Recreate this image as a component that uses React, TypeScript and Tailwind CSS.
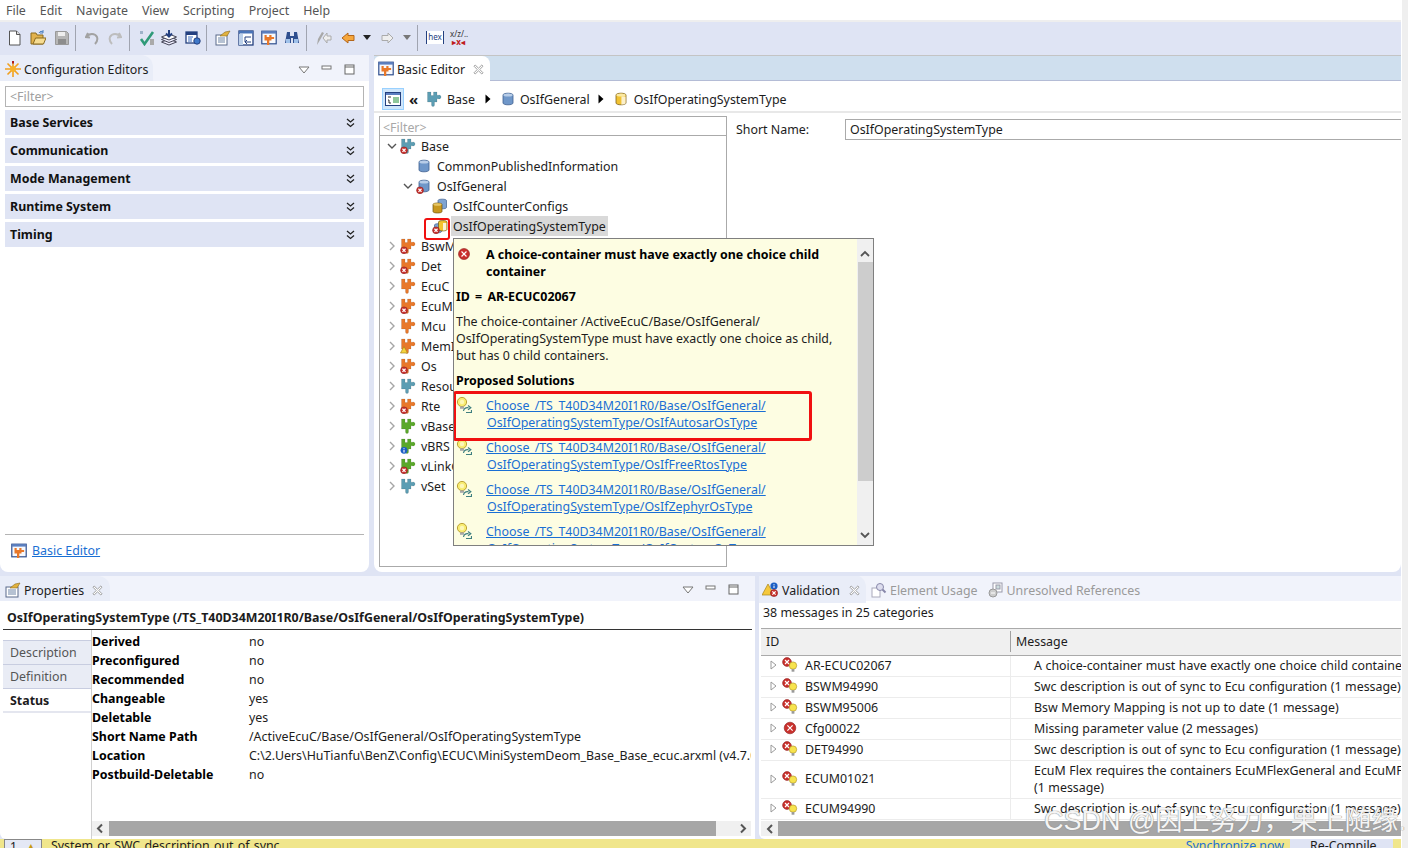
import React from "react";

const X = ({ cx, cy, r }: { cx: number; cy: number; r: number }) => (
  <g>
    <circle cx={cx} cy={cy} r={r} fill="#c9302c" stroke="#8f1f1f" strokeWidth="0.6" />
    <path d={`M${cx - r * 0.45} ${cy - r * 0.45}L${cx + r * 0.45} ${cy + r * 0.45}M${cx + r * 0.45} ${cy - r * 0.45}L${cx - r * 0.45} ${cy + r * 0.45}`} stroke="#fff" strokeWidth="1.2" />
  </g>
);

const Badge = ({ kind }: { kind?: string }) => {
  if (kind === "err") return <X cx={4} cy={12.3} r={3.4} />;
  if (kind === "warn") return <path d="M4 8.5L7.5 15H.5z" fill="#f5d33c" stroke="#a8841a" strokeWidth="0.7" />;
  if (kind === "info")
    return (
      <g>
        <circle cx={4} cy={12.3} r={3.4} fill="#1c5fc4" />
        <path d="M4 10v.8M4 11.8v2.6" stroke="#fff" strokeWidth="1.1" />
      </g>
    );
  return null;
};

const Puzzle = ({ c, badge, d = "#00000030" }: { c: string; badge?: string; d?: string }) => (
  <svg width="16" height="16" viewBox="0 0 16 16" className="shrink-0">
    <path d="M1.5 1h3.5v3.5h2.5V1H11v3.2h1.2a2 2 0 1 1 0 3.6H11V11H8.5v3a1.5 1.5 0 0 1-3 0v-3h-4z" fill={c} stroke={d} strokeWidth="0.5" />
    <Badge kind={badge} />
  </svg>
);

const Cyl = ({ gold, split, badge }: { gold?: boolean; split?: boolean; badge?: string }) => (
  <svg width="16" height="16" viewBox="0 0 16 16" className="shrink-0">
    <path d="M3 4c0-2.4 10-2.4 10 0v8c0 2.4-10 2.4-10 0z" fill={gold ? "#f1c232" : "#6f97c9"} stroke={gold ? "#7d6220" : "#3f5f8f"} strokeWidth="0.8" />
    <ellipse cx="8" cy="4" rx="4.6" ry="1.6" fill={gold ? "#fbe9a2" : "#b8cde8"} />
    {split && <path d="M8.4 5.5h4.2v7c-1 .8-3 1.2-4.2 1.2z" fill="#fff" opacity="0.75" />}
    <Badge kind={badge} />
  </svg>
);

const CylPair = ({ front, badge }: { front: "gold" | "split"; badge?: string }) => (
  <svg width="16" height="16" viewBox="0 0 16 16" className="shrink-0">
    {front === "gold" ? (
      <g>
        <path d="M6 2.5c0-1.8 8.5-1.8 8.5 0v7c0 1.8-8.5 1.8-8.5 0z" fill="#7ea3d1" stroke="#3f5f8f" strokeWidth="0.7" />
        <path d="M1 6.5c0-2 9-2 9 0v7c0 2-9 2-9 0z" fill="#c8981f" stroke="#6f5413" strokeWidth="0.7" />
        <ellipse cx="5.5" cy="6.5" rx="4.1" ry="1.3" fill="#e6c666" />
      </g>
    ) : (
      <g>
        <path d="M2.5 7c0-1.7 7-1.7 7 0v6.5c0 1.7-7 1.7-7 0z" fill="#7ea3d1" stroke="#3f5f8f" strokeWidth="0.7" />
        <path d="M6.5 4c0-1.9 8.5-1.9 8.5 0v7.5c0 1.9-8.5 1.9-8.5 0z" fill="#f3c52e" stroke="#6f5413" strokeWidth="0.7" />
        <path d="M11 5h3.3v6.7c-.8.5-2.3.8-3.3.8z" fill="#fff" opacity="0.8" />
      </g>
    )}
    <Badge kind={badge} />
  </svg>
);

const EditorIcon = () => (
  <svg width="16" height="16" viewBox="0 0 16 16" className="shrink-0">
    <rect x="0.8" y="1.2" width="14.4" height="12.6" fill="#f7f9fd" stroke="#2f4f8f" strokeWidth="1.2" />
    <rect x="1" y="1.2" width="14" height="2.4" fill="#5b7fc0" />
    <path d="M3.5 5h2.2v2h2.6V5h2.2v2h2.6v2h-2.6v1.5H8.3V15H6v-4.5H3.5z" fill="#e8782a" />
  </svg>
);

const Bulb = () => (
  <svg width="16" height="16" viewBox="0 0 16 16" className="shrink-0">
    <circle cx="6" cy="5" r="4.6" fill="#f8ec72" stroke="#b59a2a" strokeWidth="0.9" />
    <circle cx="6" cy="5" r="2.2" fill="#fdf7b8" />
    <rect x="4" y="9.4" width="4" height="2.4" fill="#a8a8a8" />
    <path d="M7.5 14c.5-2.8 2.5-3.6 5-3.3M12 8.6l2.8 2.1-2.8 2.1M10 15.5h5.5V13" stroke="#3f7f80" strokeWidth="1.2" fill="none" />
  </svg>
);

const ErrBulb = () => (
  <svg width="16" height="16" viewBox="0 0 16 16" className="shrink-0">
    <X cx={5} cy={5} r={4.4} />
    <circle cx="11" cy="8.6" r="3.7" fill="#f7e34e" stroke="#b59a2a" strokeWidth="0.7" />
    <rect x="9.6" y="12.1" width="2.8" height="2.6" fill="#9a9a9a" />
  </svg>
);

const ErrOnly = () => (
  <svg width="16" height="16" viewBox="0 0 16 16" className="shrink-0">
    <X cx={8} cy={8} r={5.8} />
  </svg>
);

const CloseX = () => (
  <svg width="11" height="11" viewBox="0 0 11 11" className="shrink-0">
    <path d="M1 2.2L2.2 1l3.3 3.2L8.8 1 10 2.2 6.8 5.5 10 8.8 8.8 10 5.5 6.8 2.2 10 1 8.8l3.2-3.3z" fill="#fff" stroke="#8a8a8a" strokeWidth="0.8" />
  </svg>
);

const ViewBtns = () => (
  <div className="flex items-center gap-[11px]">
    <svg width="12" height="8" viewBox="0 0 12 8"><path d="M1 1h10L6 7z" fill="#fff" stroke="#777" /></svg>
    <svg width="12" height="6" viewBox="0 0 12 6" className="mb-[4px]"><rect x="1" y="1" width="9" height="3" fill="#fff" stroke="#777" /></svg>
    <svg width="12" height="12" viewBox="0 0 12 12"><rect x="1" y="1" width="9" height="9" fill="#fff" stroke="#666" /><path d="M1 3h9" stroke="#666" /></svg>
  </div>
);

const Section = ({ t }: { t: string }) => (
  <div className="h-[25px] mx-[5px] bg-[#dfe4f4] flex items-center justify-between pl-[5px] pr-[9px] font-bold text-[#111] shrink-0">
    <span>{t}</span>
    <svg width="9" height="10" viewBox="0 0 9 10"><path d="M1 1l3.5 3L8 1M1 5.5l3.5 3 3.5-3" stroke="#222" strokeWidth="1.3" fill="none" /></svg>
  </div>
);

const Chev = ({ open }: { open?: boolean }) => (
  <svg width="10" height="10" viewBox="0 0 10 10" className="shrink-0">
    {open ? <path d="M1 3l4 4 4-4" stroke="#555" strokeWidth="1.4" fill="none" /> : <path d="M3 1l4 4-4 4" stroke="#a6a6a6" strokeWidth="1.4" fill="none" />}
  </svg>
);

const treeRows: [string, string, string?][] = [
  ["BswM", "#e8782a", "err"],
  ["Det", "#e8782a", "err"],
  ["EcuC", "#e8782a"],
  ["EcuM", "#e8782a", "err"],
  ["Mcu", "#e8782a"],
  ["MemIf", "#e8782a", "warn"],
  ["Os", "#e8782a", "err"],
  ["Resource", "#5c9db3"],
  ["Rte", "#e8782a", "err"],
  ["vBase", "#5aa82a"],
  ["vBRS", "#5aa82a", "info"],
  ["vLinkGen", "#5aa82a", "err"],
  ["vSet", "#5c9db3"],
];

const props: [string, string][] = [
  ["Derived", "no"],
  ["Preconfigured", "no"],
  ["Recommended", "no"],
  ["Changeable", "yes"],
  ["Deletable", "yes"],
  ["Short Name Path", "/ActiveEcuC/Base/OsIfGeneral/OsIfOperatingSystemType"],
  ["Location", "C:\\2.Uers\\HuTianfu\\BenZ\\Config\\ECUC\\MiniSystemDeom_Base_Base_ecuc.arxml (v4.7.0"],
  ["Postbuild-Deletable", "no"],
];

const sync = "Swc description is out of sync to Ecu configuration (1 message)";
const msgs: { id: string; m: string[]; err?: boolean }[] = [
  { id: "AR-ECUC02067", m: ["A choice-container must have exactly one choice child container"] },
  { id: "BSWM94990", m: [sync] },
  { id: "BSWM95006", m: ["Bsw Memory Mapping is not up to date (1 message)"] },
  { id: "Cfg00022", m: ["Missing parameter value (2 messages)"], err: true },
  { id: "DET94990", m: [sync] },
  { id: "ECUM01021", m: ["EcuM Flex requires the containers EcuMFlexGeneral and EcuMFixedGeneral", "(1 message)"] },
  { id: "ECUM94990", m: [sync] },
];

const links = ["OsIfAutosarOsType", "OsIfFreeRtosType", "OsIfZephyrOsType", "OsIfCustomOsType"];

const Tri = () => (
  <svg width="6" height="10" viewBox="0 0 6 10" className="shrink-0"><path d="M.5.5l5 4.5-5 4.5z" fill="#000" /></svg>
);

const Sep = () => <div className="w-px h-[26px] bg-[#a0a4b0] shrink-0" />;

const Toolbar = () => (
  <div className="h-[33px] flex items-center pl-[8px] shrink-0 pb-[2px]">
    <svg width="13" height="16" viewBox="0 0 13 16" className="mr-[9px]"><path d="M1.5 1h7l3.5 3.5V15H1.5z" fill="#fff" stroke="#555" /><path d="M8.5 1v3.5H12" fill="#ddd" stroke="#555" /></svg>
    <svg width="16" height="16" viewBox="0 0 16 16" className="mr-[9px]"><path d="M1 3h5l1 2h6v9H1z" fill="#e2b24e" stroke="#8a6a1f" /><path d="M3 14l2.5-6H16l-2.5 6z" fill="#f6dc92" stroke="#8a6a1f" /><path d="M9 3c1-2 3-2 4-1M13 0v3h-3" stroke="#4a7fc0" fill="none" /></svg>
    <svg width="14" height="14" viewBox="0 0 14 14" className="mr-[6px]"><path d="M.5.5h11l2 2v11H.5z" fill="#b6b6b6" stroke="#999" /><rect x="3" y="1" width="7" height="4" fill="#eee" /><rect x="3" y="8" width="8" height="5" fill="#8d8d8d" /></svg>
    <Sep />
    <svg width="14" height="14" viewBox="0 0 14 14" className="ml-[9px] mr-[9px]"><path d="M3 2L1 6l4 .5M1.5 6C4 2 10 2 12 6c1 3 0 5-2 7" stroke="#a2a2a2" strokeWidth="2" fill="none" /></svg>
    <svg width="14" height="14" viewBox="0 0 14 14" className="mr-[7px]"><path d="M11 2l2 4-4 .5M12.5 6C10 2 4 2 2 6c-1 3 0 5 2 7" stroke="#bdbdbd" strokeWidth="2" fill="none" /></svg>
    <Sep />
    <svg width="16" height="16" viewBox="0 0 16 16" className="ml-[9px] mr-[6px]"><path d="M2 9l3.5 5L14 2" stroke="#2f9a78" strokeWidth="2.6" fill="none" /><rect x="1" y="1" width="3" height="3" fill="#9db2c9" /><rect x="11" y="9" width="4" height="6" fill="#aaa" /></svg>
    <svg width="16" height="16" viewBox="0 0 16 16" className="mr-[8px]"><path d="M8 9l7.5 3-7.5 3-7.5-3z" fill="#eef" stroke="#445" /><path d="M8 6.5l7.5 3-7.5 3-7.5-3z" fill="#eef" stroke="#445" /><path d="M8 4l7.5 3-7.5 3L.5 7z" fill="#fff" stroke="#445" /><path d="M8 0v6M5 3.5l3 3 3-3" stroke="#24407f" strokeWidth="2" fill="none" /></svg>
    <svg width="16" height="16" viewBox="0 0 16 16" className="mr-[5px]"><rect x="1" y="2" width="11" height="11" fill="#fff" stroke="#24407f" strokeWidth="1.3" /><rect x="1" y="2" width="11" height="3" fill="#24407f" /><path d="M3 7h5M3 9h4M3 11h4" stroke="#3f6fc0" /><circle cx="12" cy="11" r="3.2" fill="#3f78c8" stroke="#24407f" /></svg>
    <Sep />
    <svg width="16" height="16" viewBox="0 0 16 16" className="ml-[8px] mr-[7px]"><rect x="1" y="5" width="11" height="10" fill="#fff" stroke="#5a6a8a" /><path d="M3 8h7M3 10h7M3 12h7" stroke="#6d84a6" /><path d="M5 6l5-4 5-1-3 5z" fill="#e2b23e" stroke="#8a6a1f" strokeWidth="0.6" /></svg>
    <svg width="16" height="16" viewBox="0 0 16 16" className="mr-[7px]"><rect x="1" y="1" width="14" height="14" fill="#fff" stroke="#24407f" strokeWidth="1.3" /><rect x="1" y="1" width="14" height="2.5" fill="#4a74b8" /><rect x="1" y="4" width="4" height="11" fill="#bcd0ea" /><path d="M13 7H7v5h6M9 10l-2 2 2 2" stroke="#24407f" fill="none" /></svg>
    <div className="mr-[7px]"><EditorIcon /></div>
    <svg width="16" height="16" viewBox="0 0 16 16" className="mr-[6px]"><path d="M3 2h3v4h4V2h3l2 11H9V8H7v5H1z" fill="#2f4f8f" /><rect x="2" y="9" width="4" height="4" fill="#9fc1ea" /><rect x="10" y="9" width="4" height="4" fill="#9fc1ea" /></svg>
    <Sep />
    <svg width="17" height="16" viewBox="0 0 17 16" className="ml-[8px] mr-[9px]"><path d="M2 15l1-6 4-7 2 1-4 7z" fill="#a8a8a8" /><path d="M16 6h-4V3L8 8l4 5v-3h4z" fill="#eee" stroke="#aaa" /></svg>
    <svg width="14" height="12" viewBox="0 0 14 12" className="mr-[8px]"><path d="M13 3.5H7V1L1 6l6 5V8.5h6z" fill="#f6a73c" stroke="#b3661a" /></svg>
    <svg width="8" height="5" viewBox="0 0 8 5" className="mr-[10px]"><path d="M0 0h8L4 5z" fill="#222" /></svg>
    <svg width="13" height="12" viewBox="0 0 13 12" className="mr-[9px]"><path d="M1 3.5h6V1l5 5-5 5V8.5H1z" fill="#eee" stroke="#aaa" /></svg>
    <svg width="8" height="5" viewBox="0 0 8 5" className="mr-[6px]"><path d="M0 0h8L4 5z" fill="#777" /></svg>
    <Sep />
    <div className="ml-[8px] mr-[6px] w-[18px] h-[13px] border-x border-[#24407f] text-[8px] leading-[12px] text-center text-[#24407f] bg-white">hex</div>
    <div className="w-[17px] text-[8px] leading-[8px] text-[#333] text-center">
      <div>x/z/..</div>
      <div className="text-[#c01c1c] font-bold">▸x◂</div>
    </div>
  </div>
);

export default function App() {
  return (
    <div className="w-[1408px] h-[848px] relative overflow-hidden flex bg-[#efefef] text-[12.4px] leading-[17px] text-[#1c1c1c] font-['Noto_Sans','Open_Sans',sans-serif]">
      <div className="w-[1401px] flex flex-col bg-[#dfe4f4] shrink-0">
        <div className="h-[22px] bg-white border-b-2 border-[#eeeeee] flex items-center gap-[14px] pl-[6px] text-[#555] shrink-0 pt-[1px]">
          {["File", "Edit", "Navigate", "View", "Scripting", "Project", "Help"].map((m) => (
            <span key={m}>{m}</span>
          ))}
        </div>
        <Toolbar />
        <div className="h-[517px] flex gap-[5px] shrink-0">
          <div className="w-[369px] bg-white rounded-b-lg flex flex-col shrink-0">
            <div className="h-[26px] flex bg-[#f1f3fb] shrink-0">
              <div className="w-[153px] rounded-tr-xl bg-[#e9edf8] flex items-center pl-[5px] gap-[3px] whitespace-nowrap pt-[2px]">
                <svg width="16" height="16" viewBox="0 0 16 16" className="shrink-0"><path d="M8 0v16M0 8h16M2.5 2.5l11 11M13.5 2.5l-11 11" stroke="#f0a020" strokeWidth="1.6" /><circle cx="8" cy="8" r="3" fill="#f6b22c" /><rect x="7" y="0" width="2" height="2.5" fill="#b01c1c" /></svg>
                <span>Configuration Editors</span>
              </div>
              <div className="flex-1 flex justify-end pr-[13px] pt-[3px]"><ViewBtns /></div>
            </div>
            <div className="mx-[5px] mt-[5px] h-[21px] border border-[#b4b4b4] pl-[4px] pt-[1px] text-[#a0a0a0] shrink-0">&lt;Filter&gt;</div>
            <div className="mt-[3px] flex flex-col gap-[3px] shrink-0">
              {["Base Services", "Communication", "Mode Management", "Runtime System", "Timing"].map((s) => (
                <Section key={s} t={s} />
              ))}
            </div>
            <div className="mt-auto mx-[5px] h-[38px] border-t border-[#b4b4b4] flex items-center pl-[6px] gap-[5px] pb-[6px]">
              <EditorIcon />
              <span className="text-[#1a6fd4] underline">Basic Editor</span>
            </div>
          </div>

          <div className="flex-1 bg-white rounded-b-lg flex flex-col mt-0">
            <div className="h-[26px] bg-[#cfdfee] border-t border-[#c4c4c4] border-b border-b-[#b4bcd6] flex shrink-0">
              <div className="w-[116px] h-[26px] bg-white rounded-tr-lg rounded-tl-md flex items-center pl-[4px] gap-[3px]">
                <EditorIcon />
                <span>Basic Editor</span>
                <span className="ml-[5px]"><CloseX /></span>
              </div>
            </div>
            <div className="h-[30px] flex items-center pl-[8px] shrink-0 pt-[6px]">
              <div className="w-[22px] h-[22px] bg-[#cfe6fb] border border-[#99d1ff] flex items-center justify-center mr-[5px]">
                <svg width="16" height="14" viewBox="0 0 16 14"><rect x=".5" y=".5" width="15" height="13" fill="#fff" stroke="#24407f" /><rect x="1" y="1" width="14" height="2" fill="#5b7fc0" /><path d="M3 5h3M3 8h1v3h2" stroke="#333" fill="none" /><rect x="8" y="5" width="6" height="6" fill="#8fc79a" /></svg>
              </div>
              <span className="w-[10px] text-[15px] font-bold leading-[14px] mr-[7px]">«</span>
              <Puzzle c="#5c9db3" />
              <span className="ml-[5px] mr-[10px]">Base</span>
              <Tri />
              <span className="ml-[9px]"><Cyl /></span>
              <span className="ml-[4px] mr-[8px]">OsIfGeneral</span>
              <Tri />
              <span className="ml-[9px]"><Cyl gold split /></span>
              <span className="ml-[5px]">OsIfOperatingSystemType</span>
            </div>
            <div className="h-[2px] bg-[#e8e8e8] shrink-0" />
            <div className="flex-1 flex pl-[5px] pt-[3px] pb-[5px] min-h-0">
              <div className="w-[348px] border border-[#aaaaaa] flex flex-col shrink-0 relative">
                <div className="h-[19px] border-b border-[#aaaaaa] pl-[3px] pt-[2px] text-[#a8a8a8] shrink-0">&lt;Filter&gt;</div>
                <div className="flex flex-col">
                  <div className="h-[20px] flex items-center pl-[7px]">
                    <Chev open />
                    <span className="w-[3px]" />
                    <Puzzle c="#5c9db3" badge="err" />
                    <span className="ml-[5px]">Base</span>
                  </div>
                  <div className="h-[20px] flex items-center pl-[33px]">
                    <span className="w-[3px]" />
                    <Cyl />
                    <span className="ml-[5px]">CommonPublishedInformation</span>
                  </div>
                  <div className="h-[20px] flex items-center pl-[23px]">
                    <Chev open />
                    <span className="w-[3px]" />
                    <Cyl badge="err" />
                    <span className="ml-[5px]">OsIfGeneral</span>
                  </div>
                  <div className="h-[20px] flex items-center pl-[52px]">
                    <CylPair front="gold" />
                    <span className="ml-[5px]">OsIfCounterConfigs</span>
                  </div>
                  <div className="h-[20px] flex items-center pl-[52px]">
                    <CylPair front="split" badge="err" />
                    <span className="ml-[3px] bg-[#d9d9d9] px-[2px] h-[20px] flex items-center">OsIfOperatingSystemType</span>
                  </div>
                  {treeRows.map(([t, c, b]) => (
                    <div key={t} className="h-[20px] flex items-center pl-[7px]">
                      <Chev />
                      <span className="w-[3px]" />
                      <Puzzle c={c} badge={b} />
                      <span className="ml-[5px]">{t}</span>
                    </div>
                  ))}
                </div>
                <div className="absolute left-[44px] top-[101px] w-[26px] h-[22px] border-2 border-[#f01010] rounded-[3px]" />
              </div>
              <div className="flex-1 flex flex-col min-w-0">
                <div className="h-[21px] mt-[3px] flex items-center pl-[9px]">
                  <span className="w-[109px] shrink-0">Short Name:</span>
                  <div className="flex-1 h-[21px] border-y border-l border-[#aaaaaa] pl-[4px] flex items-center">OsIfOperatingSystemType</div>
                </div>
              </div>
            </div>
          </div>
        </div>

        <div className="h-[4px] shrink-0" />

        <div className="h-[263px] flex gap-[4px] shrink-0">
          <div className="w-[755px] bg-white rounded-bl-md flex flex-col shrink-0 min-w-0">
            <div className="h-[25px] bg-[#f1f3fb] flex shrink-0">
              <div className="w-[110px] rounded-tr-xl bg-[#e9edf8] flex items-center pl-[5px] gap-[3px] pt-[3px]">
                <svg width="16" height="16" viewBox="0 0 16 16" className="shrink-0"><rect x="1" y="5" width="12" height="10" fill="#fff" stroke="#5a6a8a" /><path d="M3 8h8M3 10h8M3 12h8" stroke="#6d84a6" /><path d="M5 6l5-4 5-1-3 5z" fill="#e2b23e" stroke="#8a6a1f" strokeWidth="0.6" /></svg>
                <span>Properties</span>
                <span className="ml-[5px]"><CloseX /></span>
              </div>
              <div className="flex-1 flex justify-end pr-[15px] pt-[3px]"><ViewBtns /></div>
            </div>
            <div className="h-[29px] mx-[3px] pl-[4px] border-b border-[#333] flex items-center font-bold shrink-0 whitespace-nowrap pt-[5px]">
              OsIfOperatingSystemType (/TS_T40D34M20I1R0/Base/OsIfGeneral/OsIfOperatingSystemType)
            </div>
            <div className="flex-1 flex min-h-0">
              <div className="w-[92px] pl-[3px] border-r border-[#d0d0d0] shrink-0 flex flex-col pt-[10px]">
                <div className="h-[24px] bg-[#e9ecf5] border-t border-[#c8cde0] text-[#555] pl-[7px] flex items-center">Description</div>
                <div className="h-[24px] bg-[#e9ecf5] border-t border-[#c8cde0] text-[#555] pl-[7px] flex items-center">Definition</div>
                <div className="h-[25px] border-t border-[#c8cde0] border-b-2 border-b-[#e4e6ef] font-bold pl-[7px] flex items-center">Status</div>
              </div>
              <div className="flex-1 flex flex-col min-w-0">
                <div className="flex-1 pt-[2px] mr-[4px] overflow-hidden">
                  {props.map(([k, v]) => (
                    <div key={k} className="h-[19px] flex items-center whitespace-nowrap">
                      <span className="w-[157px] shrink-0 font-bold text-black">{k}</span>
                      <span>{v}</span>
                    </div>
                  ))}
                </div>
                <div className="h-[15px] mb-[3px] mr-[4px] bg-[#f0f0f0] flex items-center shrink-0">
                  <svg width="17" height="15" viewBox="0 0 17 15" className="shrink-0"><path d="M10 3.5L6 7.5l4 4" stroke="#555" strokeWidth="2" fill="none" /></svg>
                  <div className="w-[607px] h-[15px] bg-[#a6a6a6]" />
                  <div className="flex-1" />
                  <svg width="17" height="15" viewBox="0 0 17 15" className="shrink-0"><path d="M7 3.5l4 4-4 4" stroke="#555" strokeWidth="2" fill="none" /></svg>
                </div>
              </div>
            </div>
          </div>

          <div className="flex-1 bg-white rounded-bl-md flex flex-col min-w-0 overflow-hidden relative">
            <div className="h-[25px] bg-[#f1f3fb] flex items-center text-[#9a9a9a] shrink-0 whitespace-nowrap pt-[3px]">
              <div className="w-[107px] h-[28px] mt-[-3px] rounded-tr-xl bg-[#e9edf8] flex items-center pl-[3px] pt-[3px] gap-[3px] text-[#1c1c1c]">
                <svg width="17" height="16" viewBox="0 0 17 16" className="shrink-0"><path d="M6 2L12 13H0z" fill="#f5c83c" stroke="#a8841a" strokeWidth="0.7" /><circle cx="12" cy="4" r="3.6" fill="#1c5fc4" /><path d="M12 2v.8M12 3.6v2.4" stroke="#fff" /><X cx={12} cy={11} r={3.6} /></svg>
                <span>Validation</span>
                <span className="ml-[6px]"><CloseX /></span>
              </div>
              <span className="ml-[5px]">
                <svg width="16" height="16" viewBox="0 0 16 16"><rect x="1" y="6" width="8" height="9" fill="#fff" stroke="#aab" /><circle cx="9" cy="5" r="3.5" fill="#dde" stroke="#88a" /><path d="M11.5 7.5l3 3" stroke="#88a" strokeWidth="2" /></svg>
              </span>
              <span className="ml-[3px]">Element Usage</span>
              <span className="ml-[10px]">
                <svg width="16" height="16" viewBox="0 0 16 16"><rect x="5" y="1" width="9" height="9" fill="#fff" stroke="#99a" /><rect x="8" y="3" width="4" height="4" fill="#cdd" stroke="#99a" /><circle cx="5" cy="11" r="4" fill="#ccc" stroke="#999" /><path d="M3 11h4" stroke="#fff" /></svg>
              </span>
              <span className="ml-[3px]">Unresolved References</span>
            </div>
            <div className="h-[27px] pl-[4px] flex items-center shrink-0 pb-[5px]">38 messages in 25 categories</div>
            <div className="h-[28px] ml-[2px] bg-[#f0f0f0] border-y border-[#aaaaaa] flex items-center shrink-0 pb-[1px]">
              <span className="w-[250px] pl-[5px] border-r border-[#a0a0a0] h-[21px] flex items-center shrink-0">ID</span>
              <span className="pl-[5px]">Message</span>
            </div>
            <div className="flex-1 min-h-0 overflow-hidden ml-[2px] [word-spacing:0.3px]">
              {msgs.map((r) => (
                <div key={r.id} className={`flex border-b border-[#ececec] whitespace-nowrap ${r.m.length > 1 ? "h-[38px]" : "h-[21px]"}`}>
                  <div className="w-[250px] border-r border-[#ececec] flex items-center pl-[9px] shrink-0 pb-[2px]">
                    <svg width="7" height="10" viewBox="0 0 7 10" className="shrink-0"><path d="M1 1l5 4-5 4z" fill="#fff" stroke="#9a9a9a" /></svg>
                    <span className="ml-[5px]">{r.err ? <ErrOnly /> : <ErrBulb />}</span>
                    <span className="ml-[7px]">{r.id}</span>
                  </div>
                  <div className="pl-[23px] flex flex-col justify-center pb-[2px]">
                    {r.m.map((l) => (
                      <div key={l}>{l}</div>
                    ))}
                  </div>
                </div>
              ))}
            </div>
            <div className="h-[15px] mb-[3px] ml-[2px] bg-[#a6a6a6] flex items-center shrink-0">
              <div className="w-[17px] h-[15px] bg-[#f0f0f0] flex items-center justify-center">
                <svg width="8" height="10" viewBox="0 0 8 10"><path d="M6 1L2 5l4 4" stroke="#555" strokeWidth="2" fill="none" /></svg>
              </div>
            </div>
          </div>
        </div>

        <div className="h-[9px] bg-[#f0e68c] flex shrink-0 overflow-hidden relative">
          <div className="ml-[4px] w-[38px] h-[12px] bg-[#e4e8f5] border border-[#888] text-[12px] leading-[14px] pl-[5px] flex gap-[8px]">
            <span>1</span>
            <span className="text-[#c89a10]">▲</span>
          </div>
          <span className="ml-[9px] leading-[14px] h-[14px] [word-spacing:1px]">System or SWC description out of sync</span>
          <span className="ml-auto leading-[14px] h-[14px] text-[#1a6fd4] underline mr-[6px]">Synchronize now</span>
          <div className="w-[103px] bg-[#dfe4f4] leading-[14px] h-[14px] pl-[20px] mr-[8px]">Re-Compile</div>
        </div>
      </div>
      <div className="w-px bg-white shrink-0" />

      <div className="absolute left-[453px] top-[238px] w-[421px] h-[308px] bg-[#fdfde2] border border-[#7f7f7f] flex">
        <div className="w-[403px] shrink-0 overflow-hidden pl-[2px] pt-[7px] relative">
          <div className="flex">
            <svg width="16" height="16" viewBox="0 0 16 16" className="ml-[1px] shrink-0"><X cx={7} cy={8} r={5.5} /></svg>
            <div className="ml-[13px] font-bold text-black w-[350px]">A choice-container must have exactly one choice child container</div>
          </div>
          <div className="mt-[8px] font-bold text-black [word-spacing:2px]">ID = AR-ECUC02067</div>
          <div className="mt-[8px] whitespace-nowrap">
            <div>The choice-container /ActiveEcuC/Base/OsIfGeneral/</div>
            <div>OsIfOperatingSystemType must have exactly one choice as child,</div>
            <div>but has 0 child containers.</div>
          </div>
          <div className="mt-[8px] font-bold text-black">Proposed Solutions</div>
          {links.map((l) => (
            <div key={l} className="mt-[8px] flex h-[34px] shrink-0">
              <Bulb />
              <div className="ml-[14px] text-[#1a6fd4] underline whitespace-nowrap">
                <div className="[word-spacing:2px]">Choose /TS_T40D34M20I1R0/Base/OsIfGeneral/</div>
                <div className="ml-[1px]">{`OsIfOperatingSystemType/${l}`}</div>
              </div>
            </div>
          ))}
          <div className="absolute left-[-1px] top-[152px] w-[359px] h-[50px] border-[3px] border-[#f01010] rounded-[3px]" />
        </div>
        <div className="flex-1 bg-[#f0f0f0] flex flex-col items-center">
          <svg width="10" height="8" viewBox="0 0 10 8" className="mt-[11px] mb-[4px] shrink-0"><path d="M1 6l4-4 4 4" stroke="#555" strokeWidth="1.8" fill="none" /></svg>
          <div className="w-[15px] h-[219px] bg-[#cdcdcd]" />
          <svg width="10" height="8" viewBox="0 0 10 8" className="mt-auto mb-[6px] shrink-0"><path d="M1 2l4 4 4-4" stroke="#555" strokeWidth="1.8" fill="none" /></svg>
        </div>
      </div>

      <div className="absolute left-[1044px] top-[803px] whitespace-nowrap text-[27px] leading-[36px] text-[#f4f4f4] [text-shadow:0_0_1px_#8a8a8a,0_0_1px_#8a8a8a] font-['Liberation_Sans','Noto_Sans_CJK_SC',sans-serif]">
        CSDN @因上努力，果上随缘.
      </div>
    </div>
  );
}
